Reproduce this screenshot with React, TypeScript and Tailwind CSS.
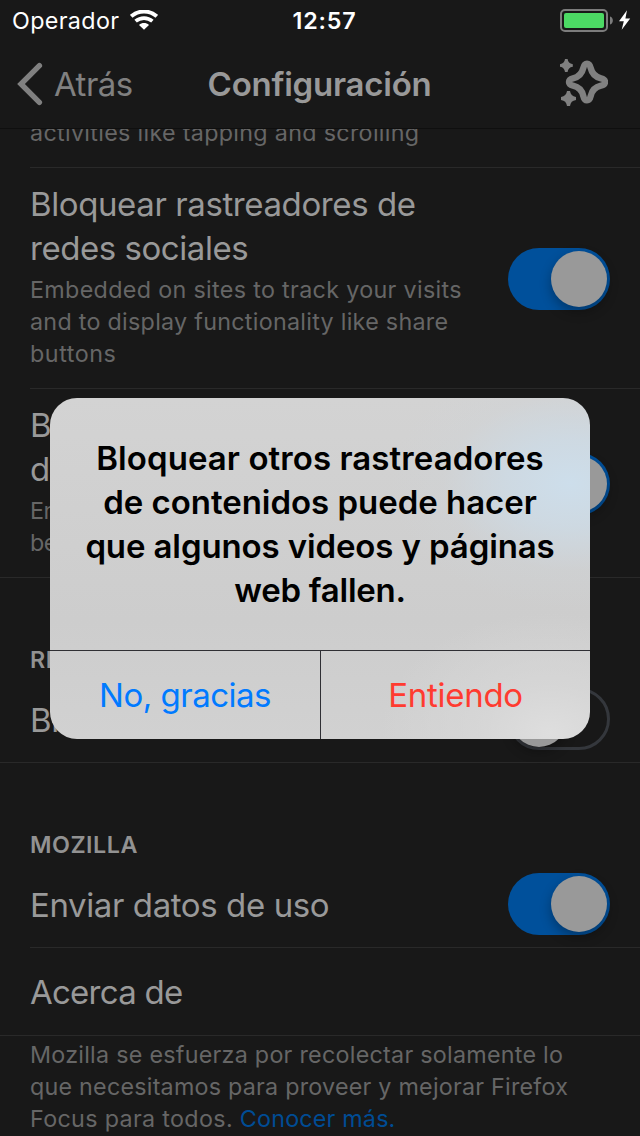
import React from 'react';

function StatusBar() {
  return (
    <div className="flex h-10 items-center pl-[12px] pr-[9px] pt-px text-white">
      <div className="flex flex-1 items-center gap-[11px]">
        <span className="text-[23.3px] leading-[40px] tracking-[0.36px]">Operador</span>
        <svg className="-mt-px h-5 w-7" viewBox="0 0 28 20" fill="none" stroke="currentColor">
          <path d="M1.2 6.4 C8.5 -0.2 19.5 -0.2 26.8 6.4" strokeWidth="3.9" />
          <path d="M5.6 11.2 C10.5 7 17.5 7 22.4 11.2" strokeWidth="3.7" />
          <path d="M14 19.8 L9 14.9 C12 12.4 16 12.4 19 14.9 Z" fill="currentColor" stroke="none" />
        </svg>
      </div>
      <span className="pl-[6px] text-[23.3px] font-semibold leading-[40px] tracking-[0.85px]">12:57</span>
      <div className="flex flex-1 justify-end">
        <svg className="-mt-px h-6 w-[71px]" viewBox="0 0 71 24">
          <rect x="1" y="2" width="46" height="21" rx="4" fill="none" stroke="#7c7c7c" strokeWidth="2" />
          <rect x="4" y="5" width="40" height="15" rx="2" fill="#4cd964" />
          <path d="M50 8.5 C53.8 9.5 53.8 15.5 50 16.5 Z" fill="#7c7c7c" />
          <path d="M67 2.2 L59 13.2 H63.8 L61.7 21.8 L70.2 10.4 H65.4 Z" fill="#ffffff" />
        </svg>
      </div>
    </div>
  );
}

function NavBar() {
  return (
    <div className="flex h-[89px] items-center border-b border-[#0f0f0f] pl-[17px] pr-8 text-[#808080]">
      <div className="flex flex-1 items-center gap-[11px]">
        <svg className="h-[44px] w-[26px]" viewBox="0 0 26 44" fill="none" stroke="currentColor" strokeWidth="5.4" strokeLinecap="round" strokeLinejoin="miter">
          <path d="M22.4 3.7 L4 22 L22.4 40.3" />
        </svg>
        <span className="text-[33px] leading-[44px] tracking-[-0.5px]">Atrás</span>
      </div>
      <span className="pl-[14px] text-[33px] font-semibold leading-[44px] tracking-[-0.24px] text-[#999999]">
        Configuración
      </span>
      <div className="flex flex-1 justify-end">
        <svg className="-mt-1 h-[48px] w-[48px]" viewBox="560 58 48 48">
          <path
            d="M587 63.7 C584.7 63.7 583.9 65.5 583.3 68 C582 73.8 579 77 573 78.3 C570.5 78.9 569 79.7 569 82 C569 84.3 570.5 85.1 573 85.7 C579 87 582 90.2 583.3 96 C583.9 98.5 584.7 100.3 587 100.3 C589.3 100.3 590.1 98.5 590.7 96 C592 90.2 595 87 601 85.7 C603.5 85.1 605 84.3 605 82 C605 79.7 603.5 78.9 601 78.3 C595 77 592 73.8 590.7 68 C590.1 65.5 589.3 63.7 587 63.7 Z"
            fill="none"
            stroke="currentColor"
            strokeWidth="6.4"
          />
          <path
            d="M565 59 H567.6 C568 62 569.5 63.7 572.8 64.2 V66.8 C569.5 67.3 568 69 567.6 72 H565 C564.6 69 563.1 67.3 559.8 66.8 V64.2 C563.1 63.7 564.6 62 565 59 Z"
            fill="currentColor"
          />
          <path
            d="M567 91 H570 C570.5 94.6 572.3 96.4 576 97 V100 C572.3 100.6 570.5 102.4 570 106 H567 C566.5 102.4 564.7 100.6 561 100 V97 C564.7 96.4 566.5 94.6 567 91 Z"
            fill="currentColor"
          />
        </svg>
      </div>
    </div>
  );
}

function Toggle({ on }: { on: boolean }) {
  return on ? (
    <div className="flex h-[62px] w-[102px] shrink-0 items-center justify-end rounded-full bg-[#00509b] pr-[3px]">
      <div className="h-14 w-14 rounded-full bg-[#999999] shadow-[0_5px_12px_rgba(0,0,0,0.3)]" />
    </div>
  ) : (
    <div className="flex h-[62px] w-[102px] shrink-0 items-center rounded-full border-[3px] border-[#34373c]">
      <div className="h-14 w-14 rounded-full bg-[#999999] shadow-[0_5px_12px_rgba(0,0,0,0.3)]" />
    </div>
  );
}

function Line({ text, tracking = 'tracking-[-0.4px]' }: { text: string; tracking?: string }) {
  return <span className={`block whitespace-nowrap ${tracking}`}>{text}</span>;
}

const titleClass = 'text-[33px] leading-[44px] text-[#999999]';
const noteClass = 'text-[23.3px] leading-[32px] text-[#666666]';
const headingClass =
  'mt-[66px] pl-[30px] text-[23.3px] font-semibold leading-[32px] tracking-[0.5px] text-[#929292]';

function Separator({ inset = false }: { inset?: boolean }) {
  return <div className={`h-px shrink-0 bg-[#292929] ${inset ? 'ml-[30px]' : ''}`} />;
}

function Settings() {
  return (
    <div className="flex flex-1 flex-col overflow-hidden">
      <p className={`-mt-[12px] pb-[18px] pl-[30px] ${noteClass}`}>
        <Line text="activities like tapping and scrolling" tracking="tracking-[0.31px]" />
      </p>
      <Separator inset />

      <div className="flex h-[220px] shrink-0 justify-between pl-[30px] pr-[30px] pt-[14px]">
        <div className="w-[440px]">
          <p className={titleClass}>
            <Line text="Bloquear rastreadores de" />
            <Line text="redes sociales" tracking="tracking-[-0.45px]" />
          </p>
          <p className={`mt-[4px] ${noteClass}`}>
            <Line text="Embedded on sites to track your visits" tracking="tracking-[0.33px]" />
            <Line text="and to display functionality like share" tracking="tracking-[0.28px]" />
            <Line text="buttons" tracking="tracking-[0.55px]" />
          </p>
        </div>
        <div className="pt-[66px]">
          <Toggle on />
        </div>
      </div>
      <Separator inset />

      <div className="flex h-[188px] shrink-0 justify-between pl-[30px] pr-[30px] pt-[14px]">
        <div>
          <p className={titleClass}>
            <Line text="B" />
            <Line text="d" />
          </p>
          <p className={`mt-[4px] ${noteClass}`}>
            <Line text="En" />
            <Line text="be" />
          </p>
        </div>
        <div className="pt-[50px]">
          <Toggle on />
        </div>
      </div>
      <Separator />

      <h2 className={headingClass}>RE</h2>
      <div className="flex h-[86px] shrink-0 items-center justify-between px-[30px]">
        <p className={`pt-[2px] ${titleClass}`}>
          <Line text="Bl" />
        </p>
        <Toggle on={false} />
      </div>
      <Separator />

      <h2 className={headingClass}>MOZILLA</h2>
      <div className="flex h-[86px] shrink-0 items-center justify-between px-[30px]">
        <p className={`pt-px ${titleClass}`}>
          <Line text="Enviar datos de uso" />
        </p>
        <Toggle on />
      </div>
      <Separator inset />
      <div className="flex h-[87px] shrink-0 items-center px-[30px]">
        <p className={titleClass}>
          <Line text="Acerca de" tracking="tracking-[-0.75px]" />
        </p>
      </div>
      <Separator />
      <p className={`mt-[3px] pl-[30px] ${noteClass}`}>
        <Line text="Mozilla se esfuerza por recolectar solamente lo" tracking="tracking-[0.26px]" />
        <Line text="que necesitamos para proveer y mejorar Firefox" tracking="tracking-[0.23px]" />
        <span className="block whitespace-nowrap tracking-[0.33px]">
          Focus para todos. <a className="tracking-[0.19px] text-[#004c94]">Conocer más.</a>
        </span>
      </p>
    </div>
  );
}

function Alert() {
  return (
    <div className="absolute left-[50px] top-[398px] flex h-[341px] w-[540px] flex-col overflow-hidden rounded-[27px] bg-[radial-gradient(ellipse_180px_125px_at_520px_85px,#cddeeb_0%,#cddbe6cc_35%,#cfd5da44_70%,transparent_100%),radial-gradient(ellipse_170px_120px_at_500px_335px,#dedede_0%,#d9d9d9aa_40%,transparent_100%),linear-gradient(to_bottom,#d3d3d3_0%,#cdcdcd_65%,#d1d1d1_100%)]">
      <p className="h-[252px] pt-[38px] text-center text-[33px] font-semibold leading-[44px] text-black">
        <Line text="Bloquear otros rastreadores" tracking="tracking-[0.07px]" />
        <Line text="de contenidos puede hacer" tracking="tracking-[-0.03px]" />
        <Line text="que algunos videos y páginas" tracking="tracking-[-0.12px]" />
        <Line text="web fallen." tracking="tracking-[-0.25px]" />
      </p>
      <div className="grid flex-1 grid-cols-2 border-t border-[#2f2f34] text-[33px] leading-[88px]">
        <button className="tracking-[-0.5px] text-[#007aff]">No, gracias</button>
        <button className="border-l border-[#2f2f34] tracking-[-0.27px] text-[#ff3b30]">Entiendo</button>
      </div>
    </div>
  );
}

export default function App() {
  return (
    <div className="relative flex h-[1136px] w-[640px] flex-col overflow-hidden bg-[#181818] font-['Inter',sans-serif]">
      <StatusBar />
      <NavBar />
      <Settings />
      <Alert />
    </div>
  );
}
